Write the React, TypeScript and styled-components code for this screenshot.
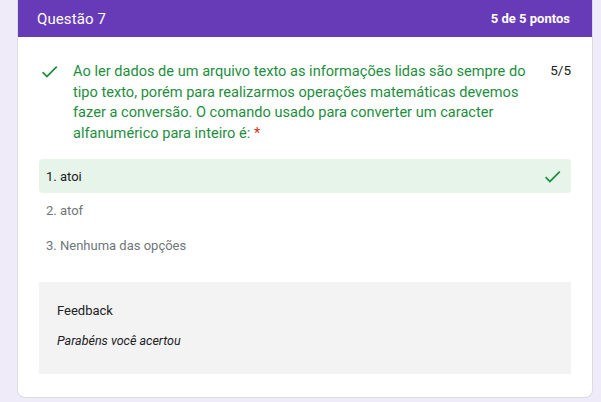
import React from "react";
import styled, { createGlobalStyle } from "styled-components";

const Global = createGlobalStyle`
  html, body { margin: 0; padding: 0; }
  body {
    background: #f0ebf8;
    font-family: Roboto, "Liberation Sans", Arial, sans-serif;
    width: 601px;
    height: 402px;
    overflow: hidden;
  }
`;

const Page = styled.div`
  padding: 0 0 0 17px;
`;

const Card = styled.div`
  width: 576px;
  box-sizing: border-box;
  background: #fff;
  border: 1px solid #dadce0;
  border-top: none;
  border-radius: 0 0 8px 8px;
  overflow: hidden;
`;

const Header = styled.div`
  height: 37px;
  background: #673ab7;
  color: #fff;
  display: flex;
  align-items: center;
  justify-content: space-between;
  padding: 0 22px 0 19px;
`;

const Title = styled.div`
  font-size: 15px;
  font-weight: 400;
  letter-spacing: 0.1px;
`;

const Points = styled.div`
  font-size: 13px;
  font-weight: 700;
`;

const Body = styled.div`
  padding: 24px 21px 23px 21px;
`;

const QuestionRow = styled.div`
  display: flex;
  align-items: flex-start;
  gap: 13px;
`;

const CheckIcon = styled.svg<{ $size: number }>`
  width: ${(p) => p.$size}px;
  height: ${(p) => p.$size}px;
  flex: none;
  fill: #1e8e3e;
`;

const QuestionText = styled.div`
  flex: 1;
  font-size: 14.6px;
  line-height: 20.5px;
  color: #1e8e3e;
  white-space: nowrap;
`;

const Required = styled.span`
  color: #d93025;
`;

const Score = styled.div`
  font-size: 13.5px;
  color: #202124;
  padding-top: 1px;
  width: 22px;
  text-align: right;
`;

const Options = styled.div`
  margin-top: 16px;
  display: flex;
  flex-direction: column;
`;

const Option = styled.div<{ $correct?: boolean }>`
  height: 35px;
  display: flex;
  align-items: center;
  justify-content: space-between;
  padding: 0 8px 0 7px;
  border-radius: 4px;
  background: ${(p) => (p.$correct ? "#e6f4ea" : "transparent")};
  color: ${(p) => (p.$correct ? "#202124" : "#70757a")};
  font-size: 13px;
  &:first-child {
    height: 34px;
  }
`;

const Feedback = styled.div`
  margin-top: 19px;
  background: #f3f3f3;
  height: 92px;
  box-sizing: border-box;
  padding: 21px 18px;
  display: flex;
  flex-direction: column;
  gap: 15px;
`;

const FeedbackTitle = styled.div`
  font-size: 13px;
  font-weight: 400;
  color: #202124;
`;

const FeedbackText = styled.div`
  font-size: 12.5px;
  font-style: italic;
  color: #202124;
`;

const Check = ({ size }: { size: number }) => (
  <CheckIcon $size={size} viewBox="0 0 24 24">
    <path d="M9 16.17L4.83 12l-1.42 1.41L9 19 21 7l-1.41-1.41z" />
  </CheckIcon>
);

export default function App() {
  return (
    <>
      <Global />
      <Page>
        <Card>
          <Header>
            <Title>Questão 7</Title>
            <Points>5 de 5 pontos</Points>
          </Header>
          <Body>
            <QuestionRow>
              <Check size={21} />
              <QuestionText>
                Ao ler dados de um arquivo texto as informações lidas são sempre do
                <br />
                tipo texto, porém para realizarmos operações matemáticas devemos
                <br />
                fazer a conversão. O comando usado para converter um caracter
                <br />
                alfanumérico para inteiro é: <Required>*</Required>
              </QuestionText>
              <Score>5/5</Score>
            </QuestionRow>
            <Options>
              <Option $correct>
                <span>1. atoi</span>
                <Check size={21} />
              </Option>
              <Option>2. atof</Option>
              <Option>3. Nenhuma das opções</Option>
            </Options>
            <Feedback>
              <FeedbackTitle>Feedback</FeedbackTitle>
              <FeedbackText>Parabéns você acertou</FeedbackText>
            </Feedback>
          </Body>
        </Card>
      </Page>
    </>
  );
}
